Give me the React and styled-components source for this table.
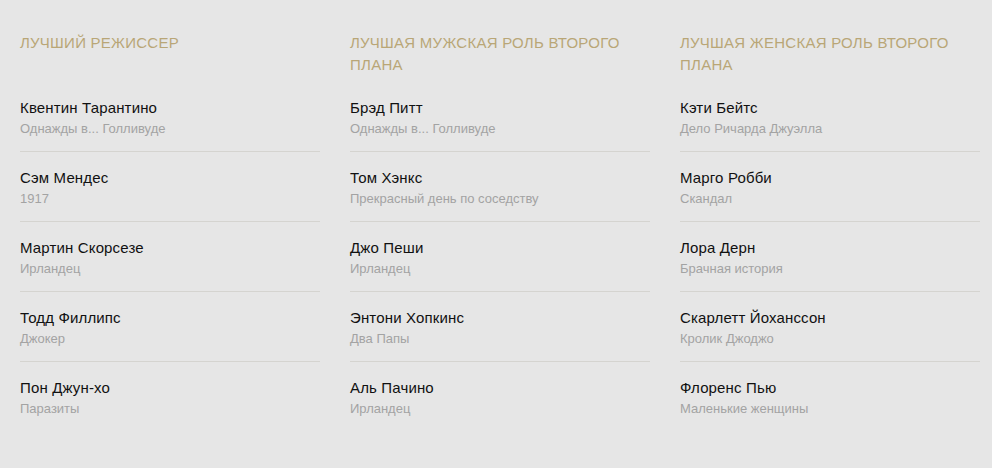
import React from 'react';
import styled, { createGlobalStyle } from 'styled-components';

const GlobalStyle = createGlobalStyle`
  html, body {
    margin: 0;
    background: #e6e6e6;
    font-family: "Liberation Sans", Arial, sans-serif;
  }
`;

const Page = styled.div`
  display: grid;
  grid-template-columns: repeat(3, 330px);
  padding: 32px 0 0 20px;
  height: 468px;
  box-sizing: border-box;
`;

const Column = styled.div`
  width: 300px;
`;

const Title = styled.h3`
  margin: 0 0 6px;
  min-height: 44px;
  font-size: 15px;
  line-height: 22px;
  font-weight: 400;
  letter-spacing: 0.25px;
  color: #b9a677;
  text-transform: uppercase;
`;

const Item = styled.div`
  padding: 15px 0 0;
  border-bottom: 1px solid ${(p) => (p.last ? 'transparent' : '#d5d4d0')};
  height: 70px;
  box-sizing: border-box;
`;

const Name = styled.div`
  font-size: 15px;
  line-height: 21px;
  letter-spacing: 0.15px;
  color: #111;
`;

const Film = styled.div`
  font-size: 13px;
  line-height: 21px;
  color: #a3a3a3;
`;

const categories = [
  {
    title: 'Лучший режиссер',
    items: [
      ['Квентин Тарантино', 'Однажды в... Голливуде'],
      ['Сэм Мендес', '1917'],
      ['Мартин Скорсезе', 'Ирландец'],
      ['Тодд Филлипс', 'Джокер'],
      ['Пон Джун-хо', 'Паразиты'],
    ],
  },
  {
    title: 'Лучшая мужская роль второго плана',
    items: [
      ['Брэд Питт', 'Однажды в... Голливуде'],
      ['Том Хэнкс', 'Прекрасный день по соседству'],
      ['Джо Пеши', 'Ирландец'],
      ['Энтони Хопкинс', 'Два Папы'],
      ['Аль Пачино', 'Ирландец'],
    ],
  },
  {
    title: 'Лучшая женская роль второго плана',
    items: [
      ['Кэти Бейтс', 'Дело Ричарда Джуэлла'],
      ['Марго Робби', 'Скандал'],
      ['Лора Дерн', 'Брачная история'],
      ['Скарлетт Йоханссон', 'Кролик Джоджо'],
      ['Флоренс Пью', 'Маленькие женщины'],
    ],
  },
];

const App = () => (
  <>
    <GlobalStyle />
    <Page>
      {categories.map((cat) => (
        <Column key={cat.title}>
          <Title>{cat.title}</Title>
          {cat.items.map(([name, film], i) => (
            <Item key={name} last={i === cat.items.length - 1}>
              <Name>{name}</Name>
              <Film>{film}</Film>
            </Item>
          ))}
        </Column>
      ))}
    </Page>
  </>
);

export default App;
